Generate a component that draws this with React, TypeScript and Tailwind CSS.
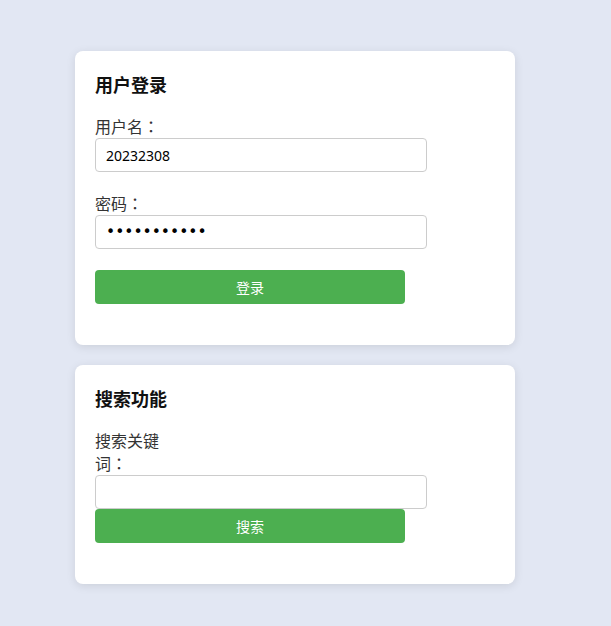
import { useState } from "react";

const cjk = { fontFamily: '"Noto Sans CJK SC", "Noto Sans", sans-serif' };
const inputFont = { fontFamily: '"Noto Sans", "Noto Sans CJK SC", sans-serif' };
const dotFont = { fontFamily: '"DejaVu Sans", sans-serif' };
// full-width colon drawn centred in its em box, as in the screenshot
const colonFont = { fontFamily: '"Noto Sans CJK JP", sans-serif' };

function Label({ text, className = "" }: { text: string; className?: string }) {
  return (
    <label
      className={`block w-20 text-[16px] leading-[23px] text-[#333] [text-spacing-trim:space-all] ${className}`}
    >
      {text}
      <span style={colonFont}>：</span>
    </label>
  );
}

const inputCls =
  "block w-[332px] h-[34px] px-[10px] border border-[#ccc] rounded text-black outline-none";

export default function App() {
  const [username, setUsername] = useState("20232308");
  const [password, setPassword] = useState("12345678901");
  const [keyword, setKeyword] = useState("");

  return (
    <div className="min-h-[626px] bg-[#e2e7f3] pt-[51px] pb-10" style={cjk}>
      <div className="ml-[75px] w-[440px] flex flex-col gap-5">
        {/* login card */}
        <div className="bg-white rounded-lg shadow-[0_2px_10px_rgba(0,0,0,0.1)] p-5">
          <h2 className="text-[18px] leading-[27px] font-bold text-[#111] mb-[17px]">用户登录</h2>
          <Label text="用户名" />
          <input
            type="text"
            value={username}
            onChange={(e) => setUsername(e.target.value)}
            className={`${inputCls} text-[14px]`}
            style={inputFont}
          />
          <Label text="密码" className="mt-5" />
          <input
            type="password"
            value={password}
            onChange={(e) => setPassword(e.target.value)}
            className={`${inputCls} text-[15.5px]`}
            style={dotFont}
          />
          <button
            type="button"
            className="block mt-[21px] mb-[21px] w-[310px] h-[34px] bg-[#4caf50] text-white text-[14px] rounded"
          >
            登录
          </button>
        </div>

        {/* search card */}
        <div className="bg-white rounded-lg shadow-[0_2px_10px_rgba(0,0,0,0.1)] p-5">
          <h2 className="text-[18px] leading-[27px] font-bold text-[#111] mb-[17px]">搜索功能</h2>
          <Label text="搜索关键词" />
          <input
            type="text"
            value={keyword}
            onChange={(e) => setKeyword(e.target.value)}
            className={`${inputCls} text-[14px]`}
            style={inputFont}
          />
          <button
            type="button"
            className="block mb-[21px] w-[310px] h-[34px] bg-[#4caf50] text-white text-[14px] rounded"
          >
            搜索
          </button>
        </div>
      </div>
    </div>
  );
}
